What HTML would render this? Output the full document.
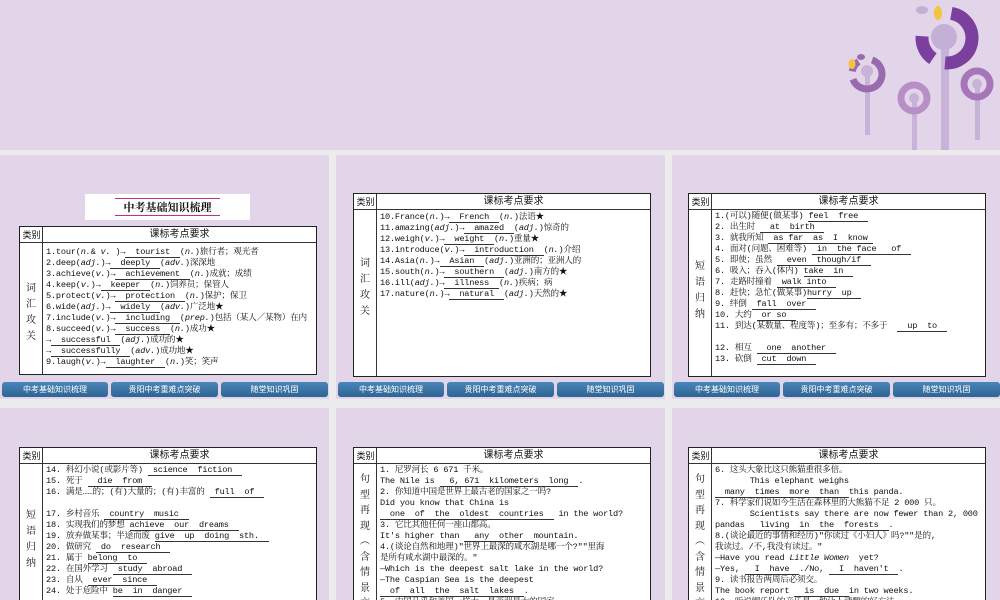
<!DOCTYPE html>
<html><head><meta charset="utf-8"><style>
*{margin:0;padding:0;box-sizing:border-box}
body{width:1000px;height:600px;overflow:hidden;background:#ececec;position:relative;font-family:"Liberation Mono","Noto Serif CJK SC",monospace;color:#111}
.s{position:absolute;background:#e3d5e9;overflow:hidden}
.tb{position:absolute;background:#fff;border:1.5px solid #222}
.hd{position:absolute;left:0;right:0;top:0;height:16px;border-bottom:1px solid #333;font-family:"Liberation Sans","Noto Sans CJK SC",sans-serif;font-size:10px;line-height:16px}
.hd .a{position:absolute;left:0;width:23px;text-align:center;font-size:9px}
.hd .b{position:absolute;left:23px;right:0;text-align:center}
.vl{position:absolute;left:22px;top:0;bottom:0;border-left:1px solid #333}
.cat{position:absolute;left:0;width:22px;text-align:center;font-family:"Noto Serif CJK SC",serif;font-size:10px;line-height:16px}
.ln{position:absolute;left:26px;font-size:8.6px;line-height:11px;white-space:pre;letter-spacing:-0.2px}
u{text-decoration:none;border-bottom:1px solid #333}
.btn{position:absolute;height:15px;background:linear-gradient(#4a86b8,#2e6493);border-radius:3px;color:#fff;font-family:"Noto Sans CJK SC",sans-serif;font-size:8px;line-height:15px;text-align:center}
i{font-style:italic}
</style></head><body>

<!-- top band -->
<div class="s" style="left:0;top:0;width:1000px;height:150px">
<svg width="1000" height="150" style="position:absolute;left:0;top:0">
 <rect x="865" y="72" width="5" height="63" fill="#c7b3d8"/>
 <rect x="912" y="100" width="5" height="52" fill="#c7b3d8"/>
 <rect x="941" y="38" width="8" height="115" fill="#c7b3d8"/>
 <rect x="975" y="86" width="5" height="54" fill="#c7b3d8"/>
 <circle cx="947" cy="38" r="25" fill="none" stroke="#7b3f9e" stroke-width="13" stroke-dasharray="76 13 26 42" transform="rotate(-80 947 38)"/>
 <circle cx="944" cy="37" r="13" fill="#c4b0d6"/>
 <ellipse cx="922" cy="10" rx="6" ry="4" fill="#c4b0d6"/>
 <ellipse cx="938" cy="13" rx="4" ry="7" fill="#f2c53d"/>
 <circle cx="867" cy="74" r="15" fill="none" stroke="#9a6aae" stroke-width="7" stroke-dasharray="60 8 12 20" transform="rotate(-70 867 74)"/>
 <circle cx="867" cy="71" r="6" fill="#c7b3d8"/>
 <ellipse cx="852" cy="64" rx="3.5" ry="5" fill="#f2c53d"/>
 <ellipse cx="861" cy="57" rx="4" ry="3" fill="#9a6aae"/>
 <circle cx="914" cy="98" r="13" fill="none" stroke="#b78fc4" stroke-width="7"/>
 <circle cx="914" cy="98" r="5" fill="#c7b3d8"/>
 <circle cx="977" cy="84" r="13" fill="none" stroke="#a677b8" stroke-width="7"/>
 <circle cx="977" cy="84" r="5" fill="#c7b3d8"/>
</svg>
</div>

<!-- Row 1 slide 1 -->
<div class="s" style="left:0;top:155px;width:329px;height:244px">
 <div style="position:absolute;left:85px;top:39px;width:165px;height:26px;background:#fff;text-align:center;font-family:'Noto Serif CJK SC',serif;font-weight:bold;font-size:11px;line-height:26px">
  <div style="position:absolute;left:30px;right:30px;top:4px;border-top:1px solid #c03080"></div>
  中考基础知识梳理
  <div style="position:absolute;left:30px;right:30px;bottom:4px;border-top:1px solid #c03080"></div>
 </div>
 <div class="tb" style="left:19px;top:71px;width:298px;height:149px">
  <div class="hd"><span class="a">类别</span><span class="b">课标考点要求</span></div>
  <div class="vl"></div>
  <div class="cat" style="top:52px">词<br>汇<br>攻<br>关</div>
  <div class="ln" style="top:20px">1.tour(<i>n.</i>& <i>v.</i> )→<u>  tourist  </u>(<i>n.</i>)旅行者；观光者</div>
  <div class="ln" style="top:31px">2.deep(<i>adj.</i>)→<u>  deeply  </u>(<i>adv.</i>)深深地</div>
  <div class="ln" style="top:42px">3.achieve(<i>v.</i>)→<u>  achievement  </u>(<i>n.</i>)成就；成绩</div>
  <div class="ln" style="top:53px">4.keep(<i>v.</i>)→<u>  keeper  </u>(<i>n.</i>)饲养员；保管人</div>
  <div class="ln" style="top:64px">5.protect(<i>v.</i>)→<u>  protection  </u>(<i>n.</i>)保护；保卫</div>
  <div class="ln" style="top:75px">6.wide(<i>adj.</i>)→<u>  widely  </u>(<i>adv.</i>)广泛地★</div>
  <div class="ln" style="top:86px">7.include(<i>v.</i>)→<u>  including  </u>(<i>prep.</i>)包括（某人／某物）在内</div>
  <div class="ln" style="top:97px">8.succeed(<i>v.</i>)→<u>  success  </u>(<i>n.</i>)成功★</div>
  <div class="ln" style="top:108px">→<u>  successful  </u>(<i>adj.</i>)成功的★</div>
  <div class="ln" style="top:119px">→<u>  successfully  </u>(<i>adv.</i>)成功地★</div>
  <div class="ln" style="top:130px">9.laugh(<i>v.</i>)→<u>  laughter  </u>(<i>n.</i>)笑；笑声</div>
 </div>
 <div class="btn" style="left:2px;top:227px;width:106px">中考基础知识梳理</div>
 <div class="btn" style="left:111px;top:227px;width:107px">贵阳中考重难点突破</div>
 <div class="btn" style="left:221px;top:227px;width:107px">随堂知识巩固</div>
</div>

<!-- Row 1 slide 2 -->
<div class="s" style="left:336px;top:155px;width:329px;height:244px">
 <div class="tb" style="left:17px;top:38px;width:298px;height:184px">
  <div class="hd"><span class="a">类别</span><span class="b">课标考点要求</span></div>
  <div class="vl"></div>
  <div class="cat" style="top:60px">词<br>汇<br>攻<br>关</div>
  <div class="ln" style="top:18px">10.France(<i>n.</i>)→<u>  French  </u>(<i>n.</i>)法语★</div>
  <div class="ln" style="top:29px">11.amazing(<i>adj.</i>)→<u>  amazed  </u>(<i>adj.</i>)惊奇的</div>
  <div class="ln" style="top:40px">12.weigh(<i>v.</i>)→<u>  weight  </u>(<i>n.</i>)重量★</div>
  <div class="ln" style="top:51px">13.introduce(<i>v.</i>)→<u>  introduction  </u>(<i>n.</i>)介绍</div>
  <div class="ln" style="top:62px">14.Asia(<i>n.</i>)→<u>  Asian  </u>(<i>adj.</i>)亚洲的；亚洲人的</div>
  <div class="ln" style="top:73px">15.south(<i>n.</i>)→<u>  southern  </u>(<i>adj.</i>)南方的★</div>
  <div class="ln" style="top:84px">16.ill(<i>adj.</i>)→<u>  illness  </u>(<i>n.</i>)疾病；病</div>
  <div class="ln" style="top:95px">17.nature(<i>n.</i>)→<u>  natural  </u>(<i>adj.</i>)天然的★</div>
 </div>
 <div class="btn" style="left:2px;top:227px;width:106px">中考基础知识梳理</div>
 <div class="btn" style="left:111px;top:227px;width:107px">贵阳中考重难点突破</div>
 <div class="btn" style="left:221px;top:227px;width:107px">随堂知识巩固</div>
</div>

<!-- Row 1 slide 3 -->
<div class="s" style="left:672px;top:155px;width:328px;height:244px">
 <div class="tb" style="left:16px;top:38px;width:298px;height:184px">
  <div class="hd"><span class="a">类别</span><span class="b">课标考点要求</span></div>
  <div class="vl"></div>
  <div class="cat" style="top:63px">短<br>语<br>归<br>纳</div>
  <div class="ln" style="top:17px">1.(可以)随便(做某事) <u>feel  free  </u></div>
  <div class="ln" style="top:28px">2. 出生时 <u>  at  birth  </u></div>
  <div class="ln" style="top:39px">3. 就我所知 <u> as far  as  I  know </u></div>
  <div class="ln" style="top:50px">4. 面对(问题、困难等) <u> in  the face   of  </u></div>
  <div class="ln" style="top:61px">5. 即使；虽然 <u>  even  though/if  </u></div>
  <div class="ln" style="top:72px">6. 吸入；吞入(体内) <u>take  in  </u></div>
  <div class="ln" style="top:83px">7. 走路时撞着 <u> walk into  </u></div>
  <div class="ln" style="top:94px">8. 赶快；急忙(做某事)<u>hurry  up  </u></div>
  <div class="ln" style="top:105px">9. 绊倒 <u> fall  over  </u></div>
  <div class="ln" style="top:116px">10. 大约 <u> or so  </u></div>
  <div class="ln" style="top:127px">11. 到达(某数量、程度等)；至多有；不多于  <u>  up  to  </u></div>
  <div class="ln" style="top:149px">12. 相互 <u>  one  another  </u></div>
  <div class="ln" style="top:160px">13. 砍倒 <u> cut  down  </u></div>
 </div>
 <div class="btn" style="left:2px;top:227px;width:106px">中考基础知识梳理</div>
 <div class="btn" style="left:111px;top:227px;width:107px">贵阳中考重难点突破</div>
 <div class="btn" style="left:221px;top:227px;width:107px">随堂知识巩固</div>
</div>

<!-- Row 2 slide 1 -->
<div class="s" style="left:0;top:408px;width:329px;height:192px">
 <div class="tb" style="left:19px;top:39px;width:298px;height:170px">
  <div class="hd"><span class="a">类别</span><span class="b">课标考点要求</span></div>
  <div class="vl"></div>
  <div class="cat" style="top:58px">短<br>语<br>归<br>纳</div>
  <div class="ln" style="top:17px">14. 科幻小说(或影片等) <u> science  fiction  </u></div>
  <div class="ln" style="top:28px">15. 死于 <u>  die  from  </u></div>
  <div class="ln" style="top:39px">16. 满是……的；(有)大量的；(有)丰富的 <u> full  of  </u></div>
  <div class="ln" style="top:61px">17. 乡村音乐 <u> country  music  </u></div>
  <div class="ln" style="top:72px">18. 实现我们的梦想 <u>achieve  our  dreams  </u></div>
  <div class="ln" style="top:83px">19. 放弃做某事；半途而废 <u>give  up  doing  sth.  </u></div>
  <div class="ln" style="top:94px">20. 做研究 <u> do  research  </u></div>
  <div class="ln" style="top:105px">21. 属于 <u>belong  to  </u></div>
  <div class="ln" style="top:116px">22. 在国外学习 <u> study  abroad  </u></div>
  <div class="ln" style="top:127px">23. 自从 <u> ever  since  </u></div>
  <div class="ln" style="top:138px">24. 处于危险中 <u>be  in  danger  </u></div>
 </div>
</div>

<!-- Row 2 slide 2 -->
<div class="s" style="left:336px;top:408px;width:329px;height:192px">
 <div class="tb" style="left:17px;top:39px;width:298px;height:170px">
  <div class="hd"><span class="a">类别</span><span class="b">课标考点要求</span></div>
  <div class="vl"></div>
  <div class="cat" style="top:22px;line-height:15.5px">句<br>型<br>再<br>现<br>︵<br>含<br>情<br>景<br>交<br>际</div>
  <div class="ln" style="top:17px">1. 尼罗河长 6 671 千米。</div>
  <div class="ln" style="top:28px">The Nile is <u>  6, 671  kilometers  long  </u>.</div>
  <div class="ln" style="top:39px">2. 你知道中国是世界上最古老的国家之一吗?</div>
  <div class="ln" style="top:50px">Did you know that China is</div>
  <div class="ln" style="top:61px"><u>  one  of  the  oldest  countries  </u> in the world?</div>
  <div class="ln" style="top:72px">3. 它比其他任何一座山都高。</div>
  <div class="ln" style="top:83px">It's higher than <u>  any  other  </u>mountain.</div>
  <div class="ln" style="top:94px">4.(谈论自然和地理)"世界上最深的咸水湖是哪一个?""里海</div>
  <div class="ln" style="top:105px">是所有咸水湖中最深的。"</div>
  <div class="ln" style="top:116px">—Which is the deepest salt lake in the world?</div>
  <div class="ln" style="top:127px">—The Caspian Sea is the deepest</div>
  <div class="ln" style="top:138px"><u>  of  all  the  salt  lakes  </u>.</div>
  <div class="ln" style="top:149px">5. 中国几乎和美国一样大，是亚洲最大的国家。</div>
 </div>
</div>

<!-- Row 2 slide 3 -->
<div class="s" style="left:672px;top:408px;width:328px;height:192px">
 <div class="tb" style="left:16px;top:39px;width:298px;height:170px">
  <div class="hd"><span class="a">类别</span><span class="b">课标考点要求</span></div>
  <div class="vl"></div>
  <div class="cat" style="top:22px;line-height:15.5px">句<br>型<br>再<br>现<br>︵<br>含<br>情<br>景<br>交<br>际</div>
  <div class="ln" style="top:17px">6. 这头大象比这只熊猫重很多倍。</div>
  <div class="ln" style="top:28px">       This elephant weighs</div>
  <div class="ln" style="top:39px"><u>  many  times  more  than  </u>this panda.</div>
  <div class="ln" style="top:50px">7. 科学家们说如今生活在森林里的大熊猫不足 2 000 只。</div>
  <div class="ln" style="top:61px">       Scientists say there are now fewer than 2, 000</div>
  <div class="ln" style="top:72px">pandas <u>  living  in  the  forests  </u>.</div>
  <div class="ln" style="top:83px">8.(谈论最近的事情和经历)"你读过《小妇人》吗?""是的,</div>
  <div class="ln" style="top:94px">我读过。/不,我没有读过。"</div>
  <div class="ln" style="top:105px">—Have you read <i>Little Women</i>  yet?</div>
  <div class="ln" style="top:116px">—Yes, <u>  I  have  </u>./No, <u>  I  haven't  </u>.</div>
  <div class="ln" style="top:127px">9. 读书报告两周后必须交。</div>
  <div class="ln" style="top:138px">The book report <u>  is  due  </u>in two weeks.</div>
  <div class="ln" style="top:149px">10. 听说锣乐队的音乐是一种让人清醒的好方法。</div>
 </div>
</div>

</body></html>
